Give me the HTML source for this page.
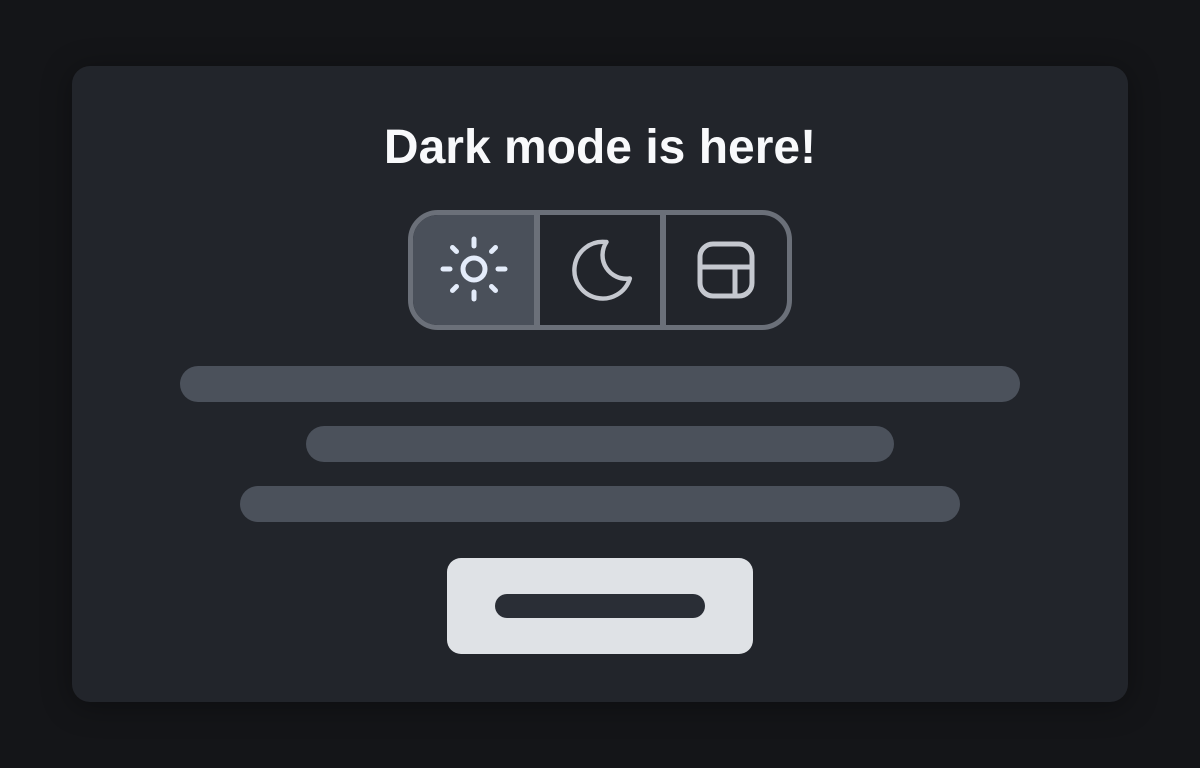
<!DOCTYPE html>
<html><head><meta charset="utf-8"><style>
html,body{margin:0;padding:0}
body{width:1200px;height:768px;background:#141518;position:relative;overflow:hidden;font-family:"Liberation Sans",sans-serif}
.card{position:absolute;left:72px;top:66px;width:1056px;height:636px;background:#22252b;border-radius:18px;box-shadow:0 4px 30px rgba(0,0,0,.35)}
h1{position:absolute;left:0;top:117px;width:1200px;margin:0;text-align:center;color:#f8f9fb;font-size:48px;font-weight:bold;line-height:62px}
.seg{position:absolute;left:408px;top:210px;width:374px;height:110px;border:5px solid #6b7079;border-radius:30px;overflow:hidden;background:#22252b}
.s1{position:absolute;left:0;top:0;width:121px;height:110px;background:#4a505a}
.d{position:absolute;top:0;width:6px;height:110px;background:#6b7079}
.bar{position:absolute;height:36px;border-radius:18px;background:#4b515b}
.btn{position:absolute;left:447px;top:558px;width:306px;height:96px;border-radius:14px;background:#dfe2e6}
.btn i{position:absolute;left:48px;top:36px;width:210px;height:24px;border-radius:12px;background:#2a2e36}
svg{position:absolute}
</style></head><body>
<div class="card"></div>
<h1>Dark mode is here!</h1>
<div class="seg"><div class="s1"></div><div class="d" style="left:121px"></div><div class="d" style="left:247px"></div></div>
<svg width="1200" height="768" style="left:0;top:0" fill="none" stroke-linecap="round" stroke-linejoin="round">
 <g stroke="#e4ecfa" stroke-width="5">
  <circle cx="474" cy="269" r="11"/>
  <line x1="474" y1="239" x2="474" y2="246"/><line x1="474" y1="292" x2="474" y2="299"/>
  <line x1="443" y1="269" x2="450" y2="269"/><line x1="498" y1="269" x2="505" y2="269"/>
  <line x1="452.5" y1="247.5" x2="456.5" y2="251.5"/><line x1="491.5" y1="286.5" x2="495.5" y2="290.5"/>
  <line x1="495.5" y1="247.5" x2="491.5" y2="251.5"/><line x1="456.5" y1="286.5" x2="452.5" y2="290.5"/>
 </g>
 <g transform="translate(567.5 232.5) scale(3.15)">
  <path d="M12 3c.132 0 .263 0 .393 0a7.5 7.5 0 0 0 7.407 11.59a9 9 0 1 1 -7.8 -11.59z" stroke="#c5c8cf" stroke-width="1.4"/>
 </g>
 <g stroke="#c5c8cf" stroke-width="5">
  <rect x="700" y="244" width="52" height="52" rx="13"/>
  <line x1="700" y1="267" x2="752" y2="267"/><line x1="735" y1="267" x2="735" y2="296"/>
 </g>
</svg>
<div class="bar" style="left:180px;top:366px;width:840px"></div>
<div class="bar" style="left:306px;top:426px;width:588px"></div>
<div class="bar" style="left:240px;top:486px;width:720px"></div>
<div class="btn"><i></i></div>
</body></html>
